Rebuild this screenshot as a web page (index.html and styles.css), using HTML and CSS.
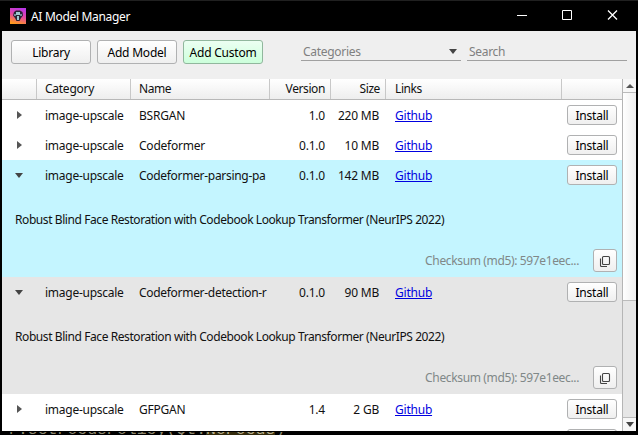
FILE: index.html
```
<!DOCTYPE html>
<html lang="en">
<head>
<meta charset="utf-8">
<title>AI Model Manager</title>
<link rel="stylesheet" href="styles.css">
</head>
<body>
<svg width="0" height="0" class="defs"><defs>
<symbol id="copy" viewBox="0 0 12 12"><path d="M4.500 1.500h5q1 0 1 1v6q0 1-1 1h-5q-1 0-1-1v-6q0-1 1-1zM1.500 3.500v7q0 1 1 1H8" fill="none" stroke="#444" stroke-width="1.1"/></symbol>
</defs></svg>
<main class="window">
  <header class="titlebar">
    <svg class="logo" viewBox="0 0 16 16">
      <defs><linearGradient id="lg" x1="0.7" y1="0" x2="0.4" y2="1"><stop offset="0" stop-color="#b936e8"/><stop offset=".5" stop-color="#e547a0"/><stop offset="1" stop-color="#ff9a20"/></linearGradient></defs>
      <rect width="16" height="16" fill="url(#lg)"/>
      <path d="M4 4l2-1.500h4L12.500 4 13 7.500 11 10 9.500 13H6.500L5 10 3 7.500z" fill="#292535"/>
      <path d="M6 4h4v3H6zM7 8h2v4H7z" fill="#9cc6cf"/><path d="M4 6h2v2H4zM10 6h2v2h-2z" fill="#718b9b"/>
    </svg>
    <h1 class="title">AI Model Manager</h1>
    <svg class="controls" viewBox="0 0 104 12" fill="none" stroke="#fff"><path d="M1 6.500h10M46.500 1.500h9v9h-9z"/><path d="M92 1.500l9 9M101 1.500l-9 9" stroke-width="1.3"/></svg>
  </header>
  <div class="toolbar">
    <button class="btn tool">Library</button>
    <button class="btn tool">Add Model</button>
    <button class="btn tool green">Add Custom</button>
    <div class="field categories"><span>Categories</span><i class="down"></i></div>
    <div class="field search"><span>Search</span></div>
  </div>
  <div class="view">
    <div class="table">
      <div class="row head"><div></div><div>Category</div><div>Name</div><div class="num">Version</div><div class="num">Size</div><div>Links</div><div></div></div>
      <div class="row"><div class="exp"><i class="right"></i></div><div>image-upscale</div><div>BSRGAN</div><div class="num">1.0</div><div class="num">220 MB</div><div><a href="#">Github</a></div><div class="act"><button class="btn install">Install</button></div></div>
      <div class="row"><div class="exp"><i class="right"></i></div><div>image-upscale</div><div>Codeformer</div><div class="num">0.1.0</div><div class="num">10 MB</div><div><a href="#">Github</a></div><div class="act"><button class="btn install">Install</button></div></div>
      <section class="open cyan">
        <div class="row"><div class="exp"><i class="down"></i></div><div>image-upscale</div><div class="name">Codeformer-parsing-pa</div><div class="num">0.1.0</div><div class="num">142 MB</div><div><a href="#">Github</a></div><div class="act"><button class="btn install">Install</button></div></div>
        <p class="desc">Robust Blind Face Restoration with Codebook Lookup Transformer (NeurIPS 2022)</p>
        <div class="sum"><span>Checksum (md5): 597e1eec...</span><button class="btn copy"><svg><use href="#copy"/></svg></button></div>
      </section>
      <section class="open gray">
        <div class="row"><div class="exp"><i class="down"></i></div><div>image-upscale</div><div class="name">Codeformer-detection-r</div><div class="num">0.1.0</div><div class="num">90 MB</div><div><a href="#">Github</a></div><div class="act"><button class="btn install">Install</button></div></div>
        <p class="desc">Robust Blind Face Restoration with Codebook Lookup Transformer (NeurIPS 2022)</p>
        <div class="sum"><span>Checksum (md5): 597e1eec...</span><button class="btn copy"><svg><use href="#copy"/></svg></button></div>
      </section>
      <div class="row"><div class="exp"><i class="right"></i></div><div>image-upscale</div><div>GFPGAN</div><div class="num">1.4</div><div class="num">2 GB</div><div><a href="#">Github</a></div><div class="act"><button class="btn install">Install</button></div></div>
      <div class="row"><div></div><div></div><div></div><div></div><div></div><div></div><div class="act"><button class="btn install"></button></div></div>
    </div>
    <div class="scroll"><div class="arrow"><i class="up"></i></div><div class="thumb"></div><div class="track"></div><div class="arrow"><i class="down"></i></div></div>
  </div>
</main>
<div class="code"><div class="line">r.setFocusPolicy(Qt.<mark>NoFocus</mark>)</div></div>
</body>
</html>
```
FILE: styles.css
```
* { box-sizing: border-box; }
body {
  margin: 0; height: 435px; overflow: hidden; background: #000;
  font: 12px/16px "Noto Sans", "Open Sans", sans-serif; letter-spacing: -0.22px; color: #111;
  border-top: 1px solid #202020;
}
.defs { position: absolute; }
.window { width: 634px; height: 430px; margin-left: 2px; display: flex; flex-direction: column; overflow: hidden; background: #efefef; }
.titlebar { height: 30px; flex: none; background: #000; color: #fff; display: flex; align-items: center; padding: 0 16px 0 8px; }
.logo { width: 16px; height: 16px; margin-top: -1px; }
.title { font-size: 12px; font-weight: 400; margin: 1px auto 0 5px; letter-spacing: -0.32px; }
.controls { width: 104px; height: 12px; margin-top: -2px; }
.toolbar { height: 48px; flex: none; display: flex; align-items: flex-start; padding: 9px 0 0 9px; }
.btn {
  font: inherit; letter-spacing: inherit; color: #000; padding: 1px 0 0; flex: none;
  border: 1px solid #b0b1b2; border-radius: 3px; background: linear-gradient(#fff, #efefef);
}
.tool { width: 80px; height: 24px; margin-right: 6px; }
.green { background: linear-gradient(#ecfff2, #ccffdb); border-color: #91b79d; }
.field { height: 21px; border-bottom: 1px solid #a0a0a0; color: #808080; display: flex; align-items: center; justify-content: space-between; padding: 3px 4px 0 2px; letter-spacing: -0.3px; }
.categories { width: 160px; margin-left: 32px; }
.search { width: 160px; margin-left: 6px; }
.down { border: 4px solid transparent; border-top: 5px solid #444; border-bottom: 0; }
.up { border: 4px solid transparent; border-bottom-color: #555; border-top: 0; }
.right { border: 4px solid transparent; border-left: 5px solid #555; border-right: 0; }
.view { flex: 1; min-height: 0; display: flex; }
.table { width: 620px; overflow: hidden; background: #fff; }
.row { display: grid; grid-template-columns: 35px 94px 139px 61px 55px 176px 60px; height: 30px; align-items: center; }
.row > div { padding: 1px 0 0 8px; white-space: nowrap; }
.row > div:nth-child(6) { padding-left: 9px; }
.row > .num { padding: 1px 7px 0 0; text-align: right; }
.row > .num:nth-child(4) { padding-right: 6px; }
.row > .exp { padding: 0 0 0 13px; display: flex; }
.exp .right { margin-left: 2px; }
.row > .act { padding: 0 0 0 5px; display: flex; }
.head { height: 21px; background: linear-gradient(#fff, #eee); border-bottom: 1px solid #b8b8b8; letter-spacing: -0.4px; }
.row.head > div { height: 20px; line-height: 20px; border-right: 1px solid #c8c8c8; padding-top: 0; }
.row.head > div:last-child { border-right: 0; }
.row.head > .num { padding-right: 5px; }
.row > div:nth-child(2) { letter-spacing: -0.26px; }
.row > .name { letter-spacing: -0.3px; }
.install { width: 50px; height: 20px; line-height: 16px; }
a { color: #0000e0; text-underline-offset: 1px; }
.open { height: 117px; }
.cyan { background: #c4f5ff; }
.gray { background: #e6e6e6; }
.desc { margin: 0; padding: 22px 0 0 13px; height: 59px; white-space: nowrap; letter-spacing: -0.42px; }
.sum { display: flex; justify-content: flex-end; align-items: center; padding-right: 5px; color: #808888; }
.sum span { margin: 1px 14px 0 0; letter-spacing: -0.36px; }
.copy { width: 24px; height: 23px; padding: 0; display: grid; place-items: center; }
.copy svg { width: 12px; height: 12px; }
.scroll { width: 14px; border-left: 1px solid #b5b5b5; display: flex; flex-direction: column; background: #e6e6e6; }
.arrow { height: 14px; flex: none; display: grid; place-items: center; background: #f7f7f7; border-bottom: 1px solid #bbb; }
.arrow:last-child { border-bottom: 0; border-top: 1px solid #bbb; }
.thumb { height: 208px; background: linear-gradient(90deg, #fff, #efefef); border-bottom: 1px solid #bbb; }
.track { flex: 1; }
.code { height: 4px; overflow: hidden; border-top: 1px solid #000; display: flex; align-items: flex-end; }
.line { height: 18px; flex: none; margin-bottom: -4px; padding-left: 8px; white-space: pre; color: #8f886f; font: 16.5px/18px "Liberation Mono", monospace; letter-spacing: 0; }
.line mark { color: #b8ae8c; background: #332b0c; }
```
